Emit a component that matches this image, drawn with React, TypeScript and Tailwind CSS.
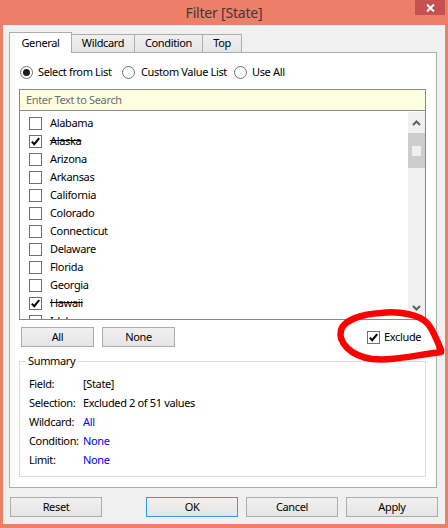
import React from "react";

const STATES: { name: string; checked: boolean }[] = [
  { name: "Alabama", checked: false },
  { name: "Alaska", checked: true },
  { name: "Arizona", checked: false },
  { name: "Arkansas", checked: false },
  { name: "California", checked: false },
  { name: "Colorado", checked: false },
  { name: "Connecticut", checked: false },
  { name: "Delaware", checked: false },
  { name: "Florida", checked: false },
  { name: "Georgia", checked: false },
  { name: "Hawaii", checked: true },
  { name: "Idaho", checked: false },
];

function Check({ checked }: { checked: boolean }) {
  return (
    <span className="w-[13px] h-[13px] shrink-0 border border-[#707070] bg-white flex items-center justify-center">
      {checked && (
        <svg width="11" height="11" viewBox="0 0 11 11">
          <path d="M1.8 5.6 L4.2 8.2 L9.2 2.2" fill="none" stroke="#000" strokeWidth="2" />
        </svg>
      )}
    </span>
  );
}

function Radio({ checked }: { checked: boolean }) {
  return (
    <span className="w-[13px] h-[13px] shrink-0 rounded-full border border-[#707070] bg-white flex items-center justify-center">
      {checked && <span className="w-[7px] h-[7px] rounded-full bg-[#1c1c1c]" />}
    </span>
  );
}

function Btn({ label, w, focus }: { label: string; w: string; focus?: boolean }) {
  return (
    <div
      className={
        "h-[20px] shrink-0 border flex items-center justify-center bg-linear-to-b from-[#f0f0f0] to-[#e5e5e5] " +
        w +
        (focus ? " border-[#3399ff]" : " border-[#acacac]")
      }
    >
      {label}
    </div>
  );
}

function Chevron({ up }: { up: boolean }) {
  return (
    <svg width="9" height="6" viewBox="0 0 9 6">
      <path
        d={up ? "M1 5 L4.5 1.5 L8 5" : "M1 1 L4.5 4.5 L8 1"}
        fill="none"
        stroke="#606060"
        strokeWidth="2"
      />
    </svg>
  );
}

function SummaryRow({ label, value, link }: { label: string; value: string; link?: boolean }) {
  return (
    <div className="h-[19px] flex items-center">
      <span className="w-[54px] shrink-0">{label}</span>
      <span className={link ? "text-[#0000ff]" : ""}>{value}</span>
    </div>
  );
}

export default function App() {
  return (
    <div className="w-[448px] h-[528px] bg-[#ED7E68] flex flex-col relative overflow-hidden whitespace-nowrap font-['Noto_Sans',sans-serif] text-[11px] tracking-[-0.35px] text-black">
      {/* title bar */}
      <div className="h-[25px] shrink-0 relative flex items-center justify-center text-[14px] tracking-[-0.2px] text-[#3a3a3a]">
        Filter [State]
        <div className="absolute right-[3px] top-0 w-[30px] h-[15px] bg-[#C75050] flex items-center justify-center">
          <svg width="9" height="8" viewBox="0 0 9 8">
            <path d="M1 0.5 L8 7.5 M8 0.5 L1 7.5" stroke="#fff" strokeWidth="2" />
          </svg>
        </div>
      </div>

      {/* client area */}
      <div className="flex-1 mx-[3px] mb-[4px] bg-[#f0f0f0] flex flex-col pl-[6px] pr-[8px] pt-[7px]">
        {/* tabs */}
        <div className="h-[21px] flex items-end shrink-0">
          <div className="w-[63px] h-[21px] relative z-10 bg-white border-x border-t border-[#acacac] flex items-center justify-center">
            General
          </div>
          <div className="w-[63px] h-[19px] border border-l-0 border-[#acacac] bg-linear-to-b from-[#f0f0f0] to-[#e5e5e5] flex items-center justify-center">
            Wildcard
          </div>
          <div className="w-[68px] h-[19px] border border-l-0 border-[#acacac] bg-linear-to-b from-[#f0f0f0] to-[#e5e5e5] flex items-center justify-center">
            Condition
          </div>
          <div className="w-[39px] h-[19px] border border-l-0 border-[#acacac] bg-linear-to-b from-[#f0f0f0] to-[#e5e5e5] flex items-center justify-center">
            Top
          </div>
        </div>

        {/* tab page */}
        <div className="h-[436px] -mt-px shrink-0 bg-white border border-[#acacac] flex flex-col pl-[9px] pr-[10px]">
          <div className="mt-[10px] h-[18px] flex items-center pl-[1px]">
            <div className="w-[102px] flex items-center gap-[5px]">
              <Radio checked />
              <span>Select from List</span>
            </div>
            <div className="w-[112px] flex items-center gap-[6px]">
              <Radio checked={false} />
              <span>Custom Value List</span>
            </div>
            <div className="flex items-center gap-[5px]">
              <Radio checked={false} />
              <span>Use All</span>
            </div>
          </div>

          <div className="mt-[8px] h-[22px] shrink-0 border border-[#828790] bg-[#ffffe1] flex items-center pl-[6px] text-[#6d6d6d]">
            Enter Text to Search
          </div>

          <div className="h-[209px] shrink-0 border-x border-b border-[#828790] bg-white flex">
            <div className="flex-1 pt-[3px] overflow-hidden">
              {STATES.map((s) => (
                <div key={s.name} className="h-[18px] flex items-center pl-[9px] gap-[8px]">
                  <Check checked={s.checked} />
                  <span className={s.checked ? "line-through" : ""}>{s.name}</span>
                </div>
              ))}
            </div>
            <div className="w-[17px] my-[1px] bg-[#f0f0f0] flex flex-col">
              <div className="h-[21px] flex items-center justify-center">
                <Chevron up />
              </div>
              <div className="h-[35px] bg-[#cdcdcd] flex items-center justify-center">
                <div className="w-[9px] h-[10px] bg-[#efefef]" />
              </div>
              <div className="flex-1" />
              <div className="h-[20px] flex items-center justify-center">
                <Chevron up={false} />
              </div>
            </div>
          </div>

          <div className="mt-[7px] h-[20px] flex items-center">
            <div className="ml-[2px]">
              <Btn label="All" w="w-[73px]" />
            </div>
            <div className="ml-[8px]">
              <Btn label="None" w="w-[73px]" />
            </div>
            <div className="ml-[192px] flex items-center gap-[4px]">
              <Check checked />
              <span>Exclude</span>
            </div>
          </div>

          <div className="mt-[14px] h-[116px] shrink-0 border border-[#dcdcdc] relative pt-[13px] pl-[9px]">
            <span className="absolute -top-[9px] left-[6px] bg-white px-[2px] leading-[16px]">Summary</span>
            <SummaryRow label="Field:" value="[State]" />
            <SummaryRow label="Selection:" value="Excluded 2 of 51 values" />
            <SummaryRow label="Wildcard:" value="All" link />
            <SummaryRow label="Condition:" value="None" link />
            <SummaryRow label="Limit:" value="None" link />
          </div>
        </div>

        {/* dialog buttons */}
        <div className="mt-[9px] h-[20px] flex pl-[1px] shrink-0">
          <Btn label="Reset" w="w-[92px]" />
          <div className="ml-[44px]">
            <Btn label="OK" w="w-[92px]" focus />
          </div>
          <div className="ml-[8px]">
            <Btn label="Cancel" w="w-[92px]" />
          </div>
          <div className="ml-[8px]">
            <Btn label="Apply" w="w-[92px]" />
          </div>
        </div>
      </div>

      {/* hand-drawn marker loop around Exclude */}
      <svg className="absolute inset-0 pointer-events-none" width="448" height="528" viewBox="0 0 448 528">
        <path
          d="M441 350 C437 340 433 330 428 324 C420 314 398 311 381 313 C362 314 344 320 341 330 C338 342 350 356 372 359 C392 361 410 356 441 352"
          fill="none"
          stroke="#ff0000"
          strokeWidth="6.5"
          strokeLinecap="round"
          strokeLinejoin="round"
        />
      </svg>
    </div>
  );
}
